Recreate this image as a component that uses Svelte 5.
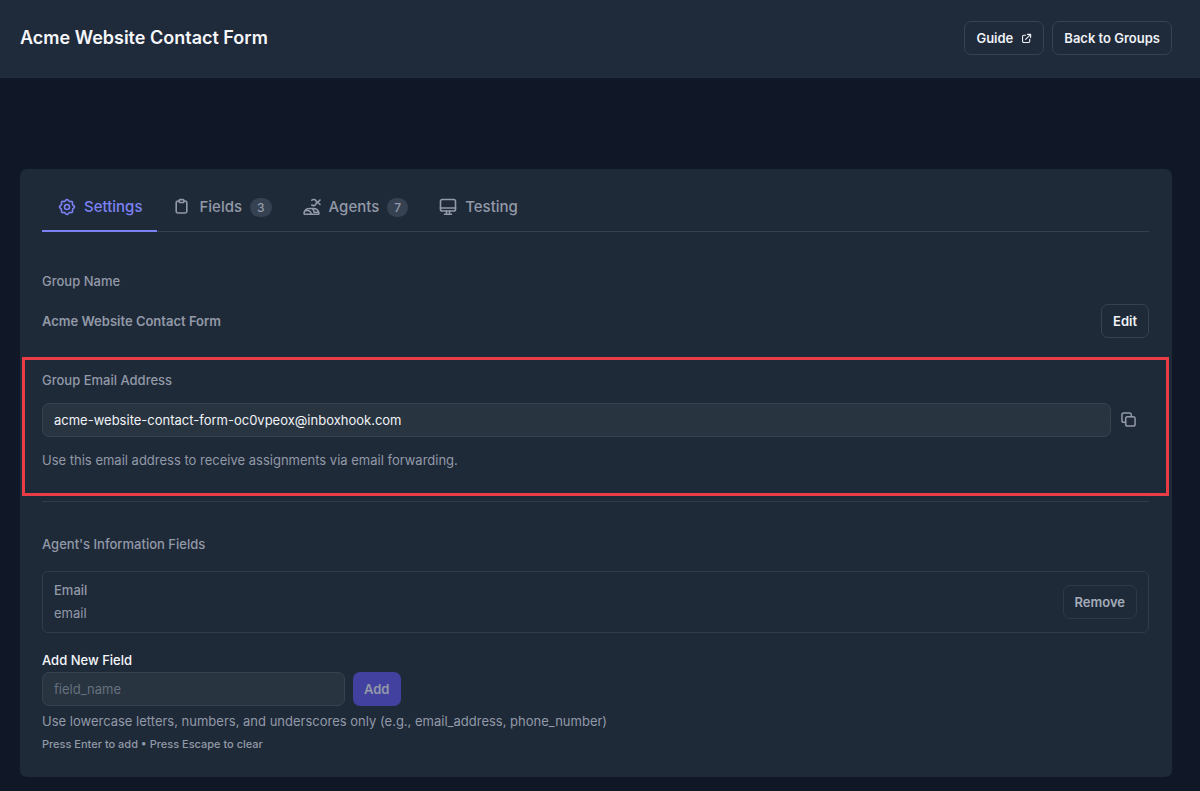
<script>
  let fieldName = $state('');
  const email = 'acme-website-contact-form-oc0vpeox@inboxhook.com';
</script>

<header class="topbar">
  <h1>Acme Website Contact Form</h1>
  <nav class="actions">
    <a class="btn" href="#guide">
      Guide
      <svg class="ext" viewBox="0 0 12 12" aria-hidden="true">
        <path d="M5 2.500H3A1.300 1.300 0 0 0 1.700 3.800V9A1.300 1.300 0 0 0 3 10.300H8.200A1.300 1.300 0 0 0 9.500 9V7M7 1.500H10.500V5M10.300 1.700L5 7" />
      </svg>
    </a>
    <a class="btn" href="#groups">Back to Groups</a>
  </nav>
</header>

<main>
  <section class="card">
    <div class="tabs" role="tablist">
      <button class="tab active" role="tab" aria-selected="true">
        <svg viewBox="0 0 18 18" aria-hidden="true">
          <path d="M9 1.500C10.300 1.500 10.500 3.200 11.500 3.500C12.400 3.900 13.500 2.900 14.300 3.700C15.100 4.500 14.100 5.600 14.500 6.500C14.800 7.500 16.500 7.700 16.500 9C16.500 10.300 14.800 10.500 14.500 11.500C14.100 12.400 15.100 13.500 14.300 14.300C13.500 15.100 12.400 14.100 11.500 14.500C10.500 14.800 10.300 16.500 9 16.500C7.700 16.500 7.500 14.800 6.500 14.500C5.600 14.100 4.500 15.100 3.700 14.300C2.900 13.500 3.900 12.400 3.500 11.500C3.200 10.500 1.500 10.300 1.500 9C1.500 7.700 3.200 7.500 3.500 6.500C3.900 5.600 2.900 4.500 3.700 3.700C4.500 2.900 5.600 3.900 6.500 3.500C7.500 3.200 7.700 1.500 9 1.500Z" />
          <circle cx="9" cy="9" r="2.500" />
        </svg>
        Settings
      </button>
      <button class="tab" role="tab" aria-selected="false">
        <svg viewBox="0 0 18 18" aria-hidden="true">
          <path d="M6 3H5A1.800 1.800 0 0 0 3.200 4.800V13.200A1.800 1.800 0 0 0 5 15H12A1.800 1.800 0 0 0 13.800 13.200V4.800A1.800 1.800 0 0 0 12 3H11" />
          <path d="M6 2.800A1.200 1.200 0 0 1 7.200 1.600H9.800A1.200 1.200 0 0 1 11 2.800V3.200A1.200 1.200 0 0 1 9.800 4.500H7.200A1.200 1.200 0 0 1 6 3.200Z" />
        </svg>
        Fields <span class="count">3</span>
      </button>
      <button class="tab" role="tab" aria-selected="false">
        <svg viewBox="0 0 18 18" aria-hidden="true">
          <path d="M8.800 2.300C10.300 .8 12.600 1.600 13.200 3.300L14.800 4.300L13.200 5.300C12.800 7.500 10.500 8.300 8.800 7M14.800 4.300L17 2M14.800 4.300L17 6.500" />
          <path d="M2 16.300C1.300 16.300 .9 15.900 1 15.200C1.500 12.300 4 10.500 7 10.500H10C13 10.500 15.500 12.300 16 15.200C16.100 15.900 15.700 16.300 15 16.300ZM3 12.700C6 12 8 13.500 8.300 16M9.500 10.700C10.500 11.700 11 12.800 11.200 14.300H15.500" />
        </svg>
        Agents <span class="count">7</span>
      </button>
      <button class="tab" role="tab" aria-selected="false">
        <svg viewBox="0 0 18 18" aria-hidden="true">
          <rect x="1.500" y="1.500" width="15" height="11.500" rx="1.800" />
          <path d="M1.500 10H16.500M7.500 13V16M10.500 13V16M5.500 16.300H12.500" />
        </svg>
        Testing
      </button>
    </div>

    <div class="panel">
      <h2>Group Name</h2>
      <div class="row name">
        <strong>Acme Website Contact Form</strong>
        <button class="btn">Edit</button>
      </div>

      <div class="highlight">
        <label for="group-email">Group Email Address</label>
        <div class="row">
          <input id="group-email" class="grow" value={email} readonly />
          <button class="copy" aria-label="Copy">
            <svg viewBox="0 0 16 16" aria-hidden="true">
              <rect x="5" y="5" width="10" height="10" rx="2" />
              <path d="M11 5V3A2 2 0 0 0 9 1H3A2 2 0 0 0 1 3V9A2 2 0 0 0 3 11H5" />
            </svg>
          </button>
        </div>
        <p>Use this email address to receive assignments via email forwarding.</p>
      </div>

      <hr />

      <h2>Agent's Information Fields</h2>
      <div class="field">
        <div>
          <div class="field-label">Email</div>
          <div class="field-key">email</div>
        </div>
        <button class="btn muted">Remove</button>
      </div>

      <form onsubmit={(e) => e.preventDefault()}>
        <label class="bright" for="new-field">Add New Field</label>
        <div class="row add">
          <input
            id="new-field"
            placeholder="field_name"
            bind:value={fieldName}
            onkeydown={(e) => { if (e.key === 'Escape') fieldName = ''; }}
          />
          <button class="primary" disabled={!fieldName}>Add</button>
        </div>
        <p>Use lowercase letters, numbers, and underscores only (e.g., email_address, phone_number)</p>
        <small>Press Enter to add • Press Escape to clear</small>
      </form>
    </div>
  </section>
</main>

<style>
  :global(body) {
    margin: 0;
    background: #101727;
    color: #9299a7;
    font: 500 13px/20px Inter, "Liberation Sans", sans-serif;
  }
  * { box-sizing: border-box; }
  h1, h2, p { margin: 0; }
  button, input { font: inherit; color: inherit; }
  button { cursor: pointer; }
  svg {
    fill: none;
    stroke: currentColor;
    stroke-width: 1.6;
    stroke-linecap: round;
    stroke-linejoin: round;
  }
  .topbar {
    display: flex;
    align-items: center;
    justify-content: space-between;
    padding: 21px 28px 22px 20px;
    background: #1f2a3a;
    border-bottom: 1px solid #222e3d;
  }
  h1 { color: #f5f7fa; font-size: 18px; line-height: 28px; font-weight: 600; }
  .actions { display: flex; gap: 8px; }
  .btn {
    display: inline-flex;
    align-items: center;
    gap: 8px;
    height: 34px;
    padding: 0 11px;
    border: 1px solid #364251;
    border-radius: 7px;
    background: none;
    color: #eef1f5;
    font-weight: 600;
    text-decoration: none;
  }
  .btn.muted { color: #a5adb9; border-color: #2d3948; }
  .ext { width: 11px; height: 11px; stroke-width: 1.2; }
  main { padding: 91px 28px 14px 20px; }
  .card { padding: 15px 23px 23px 22px; border-radius: 7px; background: #1f2a39; }
  .tabs { display: flex; border-bottom: 1px solid #364150; }
  .tab {
    display: flex;
    align-items: center;
    height: 48px;
    margin-bottom: -1px;
    padding: 0 15px 0 16px;
    border: 0;
    border-bottom: 2px solid transparent;
    background: none;
    font-size: 15px;
  }
  .tab svg { width: 18px; height: 18px; margin-right: 8px; }
  .tab.active { color: #7c82f3; border-color: #7c82f3; }
  .count {
    margin-left: 8px;
    padding: 0 7px;
    border-radius: 10px;
    background: #364152;
    font-size: 12px;
    line-height: 19px;
  }
  .panel { padding-top: 39px; }
  h2, label { display: block; font-size: 13px; line-height: 20px; font-weight: 500; }
  .row { display: flex; align-items: center; }
  .name { justify-content: space-between; margin-top: 13px; }
  strong { font-weight: 600; }
  .highlight {
    margin: 19px -20px 5px;
    padding: 10px 17px 23px;
    border: 3px solid #e93c47;
  }
  .highlight .row { margin: 12px 0 13px; }
  input {
    height: 34px;
    padding: 0 11px;
    border: 1px solid #374350;
    border-radius: 7px;
    background: #293441;
    color: #f0f3f6;
    font-weight: 400;
    outline: 0;
  }
  .grow { flex: 1; min-width: 0; }
  .copy { display: flex; margin-right: 3px; padding: 10px; border: 0; background: none; }
  .copy svg { width: 15px; height: 15px; }
  p { font-weight: 400; }
  hr { margin: 0 0 32px; border: 0; border-top: 1px solid #303c4a; }
  .field {
    display: flex;
    align-items: center;
    justify-content: space-between;
    margin: 17px 0;
    padding: 7px 11px;
    border: 1px solid #303c4a;
    border-radius: 6px;
  }
  .field-label, .field-key { line-height: 23px; }
  .field-key { font-weight: 400; }
  .bright { color: #f5f7fa; }
  .add { gap: 8px; margin: 2px 0 5px; }
  .add input { width: 303px; }
  input::placeholder { color: #66707d; opacity: 1; }
  .primary {
    height: 34px;
    padding: 0 11px;
    border: 0;
    border-radius: 7px;
    background: #4241a0;
    font-weight: 600;
  }
  small { display: block; margin-top: 3px; font-size: 11px; font-weight: 500; }
</style>
